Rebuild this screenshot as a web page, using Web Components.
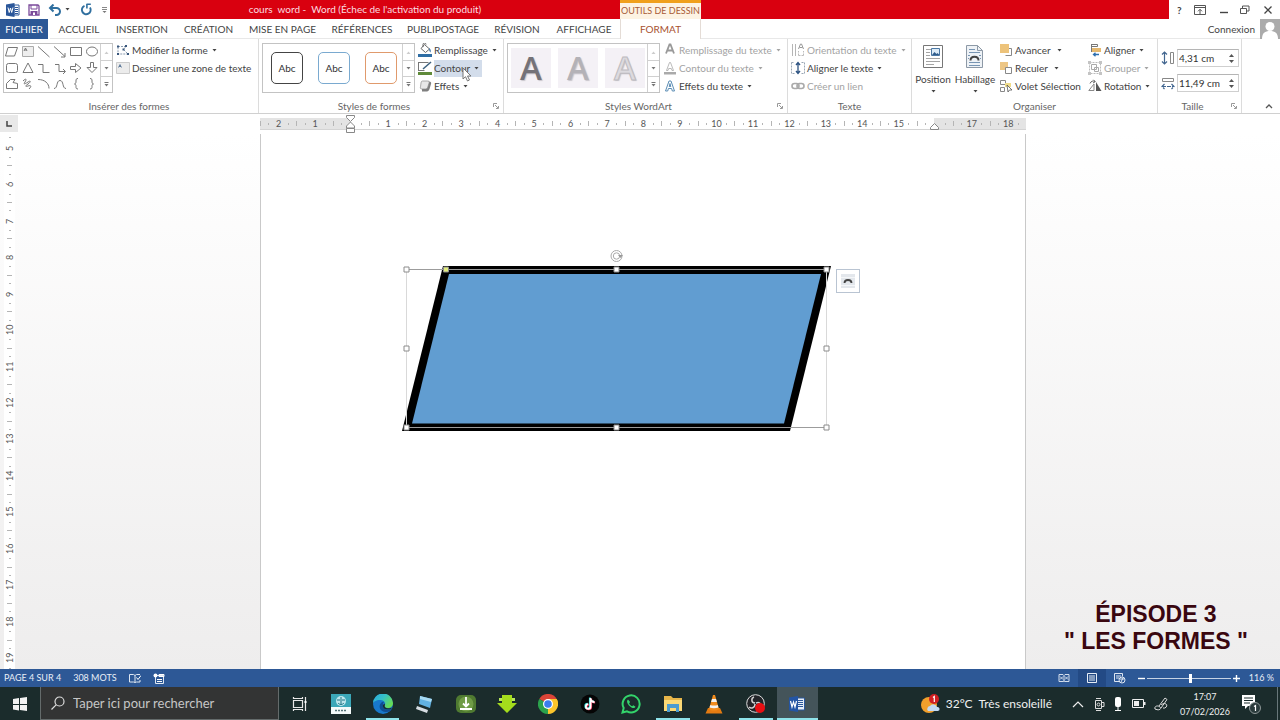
<!DOCTYPE html>
<html lang="fr">
<head>
<meta charset="utf-8">
<title>cours word - Word</title>
<style>
  :root {
    --ui: Lato, "Open Sans", sans-serif;
    --red: #d9000f;
    --word: #2d5896;
    --ink: #444;
    --mute: #a3a3a3;
    --line: #dcdcdc;
  }
  html, body { margin: 0; height: 100%; }
  body { display: flex; flex-direction: column; min-height: 100vh; overflow: hidden; background: #fff; color: var(--ink); font: 10px/14px var(--ui); }
</style>
</head>
<body>
<title-bar></title-bar>
<ribbon-tabs></ribbon-tabs>
<ribbon-bar></ribbon-bar>
<doc-workspace></doc-workspace>
<status-bar></status-bar>
<task-bar></task-bar>

<script>
const svg = (w, h, body, extra = '') =>
  `<svg width="${w}" height="${h}" viewBox="0 0 ${w} ${h}" fill="none" aria-hidden="true" ${extra}>${body}</svg>`;

const ICONS = {
  word: svg(14, 14, '<path d="M8 2h5v10H8z" fill="#fff" stroke="#2b579a"/><path d="M9 4.500h3M9 6.500h3M9 8.500h3M9 10.500h3" stroke="#2b579a"/><path d="M0 1.500 8.500 0v14L0 12.500z" fill="#2b579a"/><path d="m2 4.500 1.200 5L4.500 5l1.200 4.500L7 4.500" stroke="#fff"/>'),
  save: svg(12, 12, '<path d="M1 1h9l1 1v9H1z" stroke="#7b4a9a" stroke-width="1.300"/><path d="M3 1v4h6V1" stroke="#7b4a9a"/><path d="M2.500 7h7v4h-7z" fill="#7b4a9a"/><path d="M5 8.500h2V11H5z" fill="#fff"/>'),
  undo: svg(14, 12, '<path d="M2 4h6.500a3.300 3.300 0 0 1 0 7H7" stroke="#2f6f9f" stroke-width="2"/><path d="M5.500.5 2 4l3.500 3.500" stroke="#2f6f9f" stroke-width="2"/>'),
  redo: svg(13, 13, '<path d="M4.500 2.800A4.400 4.400 0 1 0 10 4.500" stroke="#2f6f9f" stroke-width="1.900"/><path d="M6.500 1.200h4.300M6.900 5.600V1" stroke="#2f6f9f" stroke-width="1.600"/>'),
  ribbonOpts: svg(12, 10, '<path d="M.5.5h11v9H.5zM.5 2.500h11" stroke="#555"/><path d="M6 9V4.500M4 6.300l2-2 2 2" stroke="#555"/>'),
  min: svg(9, 10, '<path d="M1 7.500h8" stroke="#444" stroke-width="1.400"/>'),
  restore: svg(10, 10, '<path d="M.5 3.500h6v5h-6zM2.500 3V1h6.500v5H7" stroke="#555"/>'),
  close: svg(10, 10, '<path d="m1.500 1.500 7 7m0-7-7 7" stroke="#444" stroke-width="1.300"/>'),
  avatar: svg(20, 20, '<path fill="#ababab" d="M0 0h20v20H0z"/><circle cx="10" cy="7.500" r="4.500" fill="#fff"/><path d="M2 20c0-6 3-8 8-8s8 2 8 8z" fill="#fff"/>'),
  editShape: svg(14, 14, '<path d="M2 3.500h8L7.500 6.500 12 11H2z" stroke="#8a9bb0" stroke-dasharray="2 1"/><path d="M1 2.500h2v2H1zM9 2h2v2H9zM1 10h2v2H1zM11 10h2v2h-2zM6.500 5.500h2v2h-2z" fill="#39577c"/>'),
  textBox: svg(14, 12, '<path d="M.5.5h13v11H.5z" fill="#ececec" stroke="#ccc"/><path d="m2.500 5.500 1.500-3 1.500 3M3 4.500h2" stroke="#4b6b8f" stroke-width=".8"/>'),
  fill: svg(14, 14, '<path d="m6.500 1.500 5 4.500-4 3.500-4.500-4z" stroke="#666" fill="#fff"/><path d="M5 4V1.500a1.500 1.500 0 0 1 3 0" stroke="#666"/><path d="M11 5c2 1 2 3 1.500 4.500C11.500 8.500 11 7 11 5z" fill="#3b73a8"/><path d="M0 11h14v3H0z" fill="#2e6da4"/>'),
  outline: svg(14, 14, '<path d="M.5 1.500h10M.5 1v9M.5 9.500h6" stroke="#777"/><path d="m5 8 8-7" stroke="#3c617f" stroke-width="1.500"/><path d="M0 11h14v3H0z" fill="#5f8a3a"/>'),
  effects: svg(14, 14, '<path d="M4 9 6 2.500h5c2 0 2.500 1 2 2.500l-1.500 5c-.5 2-2 2.500-3.500 2.500H4z" fill="#7f7f7f"/><path d="M3.500 2h5c1.500 0 2 .8 1.500 2.200L8.800 8c-.4 1.400-1.200 2-2.600 2H3C1.500 10 1 9.200 1.500 7.800L2 4c.3-1.300.5-2 1.500-2z" fill="#e8e8e8" stroke="#8a8a8a" stroke-width=".7" transform="translate(1)"/>'),
  txtFill: svg(14, 14, '<path d="m3 10.500 3.500-9h1l3.500 9M4.500 7.500h5" stroke="#999" stroke-width="1.800"/>'),
  txtOutline: svg(14, 14, '<path d="m3.500 9.500 3-8h1l3 8h-1.500L8.300 7.500H5.700L5 9.500z" stroke="#aaa" stroke-width=".8"/><path d="M1 11h12v2.500H1z" fill="#aaa"/>'),
  txtEffects: svg(14, 14, '<path d="M2.500 12 6 2h2l3.500 10H9.300L8.600 9.500H5.400L4.700 12zM6.200 7.500h1.600L7 4.500z" fill="#fff" stroke="#5b8db5"/>'),
  orient: svg(14, 14, '<path d="M1.500 1v12M4.500 1v12" stroke="#b5b5b5"/><path d="m7.500 6 2-5h1l2 5M8.500 4.500h3" stroke="#999"/><path d="M7.500 12.500V8M12.500 12.500V8M7.500 12.500h5" stroke="#bbb" stroke-dasharray="2 1"/>'),
  alignTxt: svg(14, 14, '<path d="M.5 1.500h3m7 0h3v11h-3m-7 0h-3v-11" stroke="#9aa7b5" stroke-dasharray="2 1"/><path d="M7 2v10M5 4l2-2.500L9 4M5 10l2 2.500L9 10" stroke="#2d5382" stroke-width="1.300"/>'),
  link: svg(14, 10, '<rect x="1" y="2.500" width="7" height="5" rx="2.500" stroke="#aaa" stroke-width="1.600"/><rect x="6" y="2.500" width="7" height="5" rx="2.500" stroke="#aaa" stroke-width="1.600"/>'),
  forward: svg(14, 14, '<path d="M6.500 12.500h6v-7H9" stroke="#888"/><path d="M1 1h9v9H1z" fill="#edc37a"/>'),
  backward: svg(14, 14, '<path d="M1 1h8v8H1z" fill="#edc685"/><path d="M6.500 6.500h6v6h-6z" fill="#fff" stroke="#888"/>'),
  pane: svg(14, 14, '<path d="M1.500 1.500h5v4h-5zM1.500 8.500h4v4h-4z" stroke="#888"/><path d="M6 4h6v4H6z" fill="#f0dc8a"/><path d="m8 6 5 5H10.500L9 13z" fill="#fff" stroke="#555" stroke-width=".8"/>'),
  align: svg(14, 14, '<path d="M3.500 1.500h6v2h-6z" stroke="#777"/><path d="M3.500 1v8" stroke="#777"/><path d="M4 5h9v4H4z" fill="#e6b96f"/><path d="M11 11.500H5.500M7.500 9.800 5.500 11.500l2 1.700" stroke="#2d6fb0" stroke-width="1.300"/>'),
  group: svg(14, 14, '<path d="M1.500 1.500h11v11h-11z" stroke="#bbb" stroke-dasharray="2 1"/><path d="M3.500 3.500h5v5h-5zM6.500 6.500h4v4h-4z" stroke="#aaa"/><path d="M0 0h3v3H0zM11 0h3v3h-3zM0 11h3v3H0zM11 11h3v3h-3z" fill="#c4c4c4"/>'),
  rotate: svg(14, 14, '<path d="M6 11.500H.8L6 5z" stroke="#888"/><path d="M8 12V3l5.500 9z" fill="#555"/><path d="M2 4.500C3 2 5 1.500 7 2.500M5.500.8 7.300 2.700 5 4" stroke="#666"/>'),
  height: svg(14, 14, '<path d="M3.500 1v12M1 3.500 3.500 1 6 3.500M1 10.500 3.500 13 6 10.500" stroke="#41658f" stroke-width="1.200"/><path d="M9.500 1.500h3v11h-3z" stroke="#888"/>'),
  width: svg(14, 14, '<path d="M1.500 2.500h11v3h-11z" stroke="#888"/><path d="M1 10.500h12M3.500 8 1 10.500 3.500 13M10.500 8l2.500 2.500-2.500 2.500" stroke="#41658f" stroke-width="1.200" stroke-dasharray="4 1"/>'),
  position: svg(20, 24, '<path d="M.5.5h19v22H.5z" fill="#fff" stroke="#777"/><path d="M3 4.500h14M3 7.500h4M3 10.500h4M3 13.500h14M3 16.500h14M3 19.500h8" stroke="#a5a5a5"/><path d="M8.500 3.500h8v7h-8z" fill="#dcebf7" stroke="#4b77a3"/><path d="m9 10 2.500-3 2 2 1-1 2 2z" fill="#2f5c8c"/>'),
  wrap: svg(20, 24, '<path d="M1.500.5h11l5 5v17h-16z" fill="#eef2f6" stroke="#8d99a6"/><path d="M12.500.5v5h5" stroke="#8d99a6"/><path d="M4 4.500h6M4 7.500h11M3 10.500h2M14 10.500h2M3 13.500h1M15 13.500h1M4 17.500h11M4 20.500h11" stroke="#7895b3"/><path d="M5.500 15.500c0-5 8-5 8 0" stroke="#444" stroke-width="2"/>'),
  proof: svg(12, 11, '<path d="M.5 1.500h4l1.500 1v7l-1.500-.5h-4zM6 2.500l1.500-1H11M6 9.500 7.500 9H11V7" stroke="#dfe7f2"/><path d="m7.500 4.500 1.500 2 3-4" stroke="#fff"/>'),
  macro: svg(12, 11, '<path d="M2.500 2.500h8v8h-8z" stroke="#dfe7f2" fill="none"/><path d="M4 6.500h5M4 8.500h5M6 1.500h5v2H6z" stroke="#fff"/><circle cx="2.500" cy="2.500" r="2" fill="#fff"/>'),
  read: svg(12, 10, '<path d="M1 1.500h4l1 1 1-1h4v7H7l-1-.5-1 .5H1zM6 2.500v6M2 3.500l3 3M2 6.500l3-3M7 3.500l3 3M7 6.500l3-3" stroke="#d4deec"/>'),
  printView: svg(12, 10, '<path d="M1.500.5h9v9h-9zM3 3h6M3 5h6M3 7h6" stroke="#e6edf6"/>'),
  web: svg(12, 11, '<path d="M.5.500h8v3M.5.500v8H5M2 3h5M2 5h3" stroke="#dfe7f2"/><circle cx="8" cy="7" r="3" stroke="#dfe7f2"/><path d="M6 6h4M7 9l2-4" stroke="#dfe7f2"/>'),
};

const SHAPES = [
  ['Parallélogramme', '<path d="M4 3.500h9.500L10.500 12H1.500z"/>'],
  ['Zone de texte', '<path d="M2.500 2.500h11v10h-11z" fill="#eee" stroke="#aaa"/><path d="m4 7 1.500-3L7 7M4.500 6h2"/>'],
  ['Trait', '<path d="M2 2.500 13.500 13"/>'],
  ['Flèche', '<path d="M2 2.500 13 12.500M13 9v4H9"/>'],
  ['Rectangle', '<path d="M2.500 3.500h11v8h-11z"/>'],
  ['Ellipse', '<ellipse cx="8" cy="7.500" rx="5.500" ry="4.500"/>'],
  ['Rectangle arrondi', '<rect x="2.500" y="3.500" width="11" height="9" rx="2"/>'],
  ['Triangle', '<path d="m8 3 5 9.500H3z"/>'],
  ['Connecteur en angle', '<path d="M2 4.500h5v8h6.500"/>'],
  ['Connecteur fléché', '<path d="M3 4.500h4v7h6M11 9l2.500 2.500L11 14"/>'],
  ['Flèche droite', '<path d="M2.500 6.500h5v-3L13 8l-5.500 4.500v-3h-5z"/>'],
  ['Flèche bas', '<path d="M6.500 2.500h3v5H13l-5 5-5-5h3.500z"/>'],
  ['Forme libre', '<path d="M2.500 12.500v-5l4-4H11L9 6.500l4.500 1v5z"/>'],
  ['Dessin à main levée', '<path d="M3 5c3-3 4-2 2 1s0 2 3 0 3 0 0 2-3 3 0 2 4 0 1 3"/>'],
  ['Arc', '<path d="M2 3.500c7 0 11 4 11 9"/>'],
  ['Courbe', '<path d="M2 12.500c4 0 2-8 6-8s2 8 6 8"/>'],
  ['Accolade ouvrante', '<path d="M10 2.500c-2 0-2 1-2 2.500S8 7.500 6.500 8C8 8.500 8 9 8 10.500s0 2.500 2 2.500"/>'],
  ['Accolade fermante', '<path d="M6 2.500c2 0 2 1 2 2.500s0 2.500 1.500 3C8 8.500 8 9 8 10.500S8 13 6 13"/>'],
];

const RESET = `
  *, *::before { box-sizing: border-box; }
  button { font: inherit; color: inherit; background: none; border: 0; padding: 0; margin: 0; display: flex; align-items: center; white-space: pre; }
  svg { display: block; flex: none; }
`;

function element(name, css, html) {
  customElements.define(name, class extends HTMLElement {
    connectedCallback() {
      if (this.shadowRoot) return;
      const root = this.attachShadow({ mode: 'open' });
      root.innerHTML = `<style>${RESET}${css}</style>${typeof html === 'function' ? html(this) : html}`;
    }
  });
}

/* ---------- small parts ---------- */

element('menu-arrow', `
  :host { display: block; width: 5px; height: 3px; color: #444; }
`, svg(5, 3, '<path d="M.5 0h4L2.500 2.500z" fill="currentColor"/>'));

element('tool-button', `
  :host { display: block; height: 18px; }
  button { height: 18px; }
  .icon { width: 16px; }
  .text { display: flex; align-items: center; height: 17px; padding-right: 3px; gap: 4px; }
  :host([active]) .text { background: #d3ddeb; }
  :host([disabled]) button, :host([disabled]) menu-arrow { color: var(--mute); }
`, el => `<button type="button" ${el.hasAttribute('disabled') ? 'disabled' : ''}>
  <span class="icon">${ICONS[el.getAttribute('icon')]}</span>
  <span class="text"><slot></slot>${el.hasAttribute('menu') ? '<menu-arrow></menu-arrow>' : ''}</span></button>`);

element('big-button', `
  :host { display: block; width: 42px; }
  button { flex-direction: column; width: 100%; padding-top: 4px; }
  .text { margin-top: 3px; }
  menu-arrow { margin-top: 4px; }
`, el => `<button type="button">${ICONS[el.getAttribute('icon')]}<span class="text"><slot></slot></span><menu-arrow></menu-arrow></button>`);

element('ribbon-group', `
  :host { display: flex; flex-direction: column; flex: none; border-right: 1px solid var(--line); }
  .body { display: flex; height: 60px; padding: 2px 0 0 3px; gap: 3px; }
  .foot { display: flex; align-items: center; height: 14px; color: #666; }
  .foot span { flex: 1; text-align: center; }
  .foot button { width: 14px; height: 14px; justify-content: center; }
`, el => `<div class="body"><slot></slot></div>
  <div class="foot"><span>${el.getAttribute('label')}</span>${el.hasAttribute('launcher')
    ? `<button type="button" aria-label="Options">${svg(6, 6, '<path d="M.5 4V.5H4M2 2l3 3M5.500 3v2.500H3" stroke="#999"/>')}</button>` : ''}</div>`);

element('style-gallery', `
  :host { display: flex; height: 50px; margin-top: 2px; border: 1px solid #c3c3c3; background: #fff; }
  .items { flex: 1; display: flex; align-items: center; }
  .scroll { display: grid; grid-template-rows: repeat(3, 1fr); width: 12px; border-left: 1px solid #d0d0d0; }
  .scroll button { justify-content: center; color: #777; }
  .scroll button + button { border-top: 1px solid #d0d0d0; }
  .scroll button:first-child { color: #ccc; }
`, `<div class="items"><slot></slot></div>
  <div class="scroll">
    <button type="button" aria-label="Haut">${svg(5, 3, '<path d="M.5 3h4L2.500.5z" fill="currentColor"/>')}</button>
    <button type="button" aria-label="Bas">${svg(5, 3, '<path d="M.5 0h4L2.500 2.500z" fill="currentColor"/>')}</button>
    <button type="button" aria-label="Autres">${svg(5, 5, '<path d="M.5 0h4v1h-4zM.5 2h4L2.500 4.500z" fill="currentColor"/>')}</button>
  </div>`);

element('size-field', `
  :host { display: flex; align-items: center; height: 18px; }
  label { width: 16px; }
  .box { display: flex; width: 62px; height: 18px; border: 1px solid #cfcfcf; border-top-color: #b5b5b5; background: #fff; }
  input { flex: 1; min-width: 0; border: 0; padding: 0 0 0 1px; font: 10px/16px var(--ui); color: #333; background: none; outline: 0; }
  .spin { display: flex; flex-direction: column; justify-content: center; align-items: center; gap: 3px; width: 13px; }
`, el => `<label for="f" aria-label="${el.getAttribute('label')}">${ICONS[el.getAttribute('icon')]}</label>
  <span class="box"><input id="f" value="${el.getAttribute('value')}">
  <span class="spin"><button type="button" aria-label="Plus">${svg(5, 3, '<path d="M0 3h5L2.500 0z" fill="#555"/>')}</button><button type="button" aria-label="Moins">${svg(5, 3, '<path d="M0 0h5L2.500 3z" fill="#555"/>')}</button></span></span>`);

/* ---------- title bar ---------- */

element('title-bar', `
  :host { display: grid; grid-template-columns: 110px 510px 81px 1fr 111px; height: 19px; flex: none; background: var(--red); }
  .quick { display: flex; align-items: center; gap: 8px; padding-left: 6px; background: #fff; }
  .quick .undo { gap: 3px; }
  .quick .redo { margin: 0 1px 0 2px; }
  h1 { margin: 0; font: 10px/19px var(--ui); color: #fbdde0; text-align: center; white-space: pre; }
  .context { background: #fdf3e3; border-top: 3px solid #f0a01c; color: #a85a35; text-align: center; font-size: 9px; line-height: 15px; white-space: nowrap; }
  .window { grid-column: 5; display: flex; align-items: center; justify-content: space-between; padding: 0 7px 0 8px; background: #fff; }
  .help { font-weight: bold; }
`, `
  <div class="quick">
    <button type="button" aria-label="Word">${ICONS.word}</button>
    <button type="button" aria-label="Enregistrer">${ICONS.save}</button>
    <button type="button" class="undo" aria-label="Annuler">${ICONS.undo}<menu-arrow></menu-arrow></button>
    <button type="button" class="redo" aria-label="Rétablir">${ICONS.redo}</button>
    <button type="button" aria-label="Personnaliser">${svg(5, 6, '<path d="M0 .5h5M0 2.500h5" stroke="#888"/><path d="M.5 4h4L2.500 6z" fill="#777"/>')}</button>
  </div>
  <h1>cours  word -  Word (Échec de l'activation du produit)</h1>
  <div class="context">OUTILS DE DESSIN</div>
  <div class="window">
    <button type="button" class="help">?</button>
    <button type="button" aria-label="Options du ruban">${ICONS.ribbonOpts}</button>
    <button type="button" aria-label="Réduire">${ICONS.min}</button>
    <button type="button" aria-label="Restaurer">${ICONS.restore}</button>
    <button type="button" aria-label="Fermer">${ICONS.close}</button>
  </div>`);

/* ---------- tabs ---------- */

element('ribbon-tabs', `
  :host { display: flex; height: 20px; flex: none; }
  nav { display: grid; grid-template-columns: 50px 58px 68px 65px 83px 76px 86px 62px 72px 81px; }
  nav button, .account button { justify-content: center; height: 20px; }
  nav button { border-bottom: 1px solid #e8e8e8; }
  nav .file { width: 48px; background: var(--word); color: #fff; border: 0; }
  nav .on { color: #a8512f; border: solid #e4dcd6; border-width: 0 1px; }
  .account { flex: 1; display: flex; justify-content: flex-end; align-items: center; border-bottom: 1px solid #e8e8e8; }
  .account button { gap: 5px; }
`, `<nav>
    <button type="button" class="file">FICHIER</button>
    ${['ACCUEIL', 'INSERTION', 'CRÉATION', 'MISE EN PAGE', 'RÉFÉRENCES', 'PUBLIPOSTAGE', 'RÉVISION', 'AFFICHAGE']
      .map(t => `<button type="button">${t}</button>`).join('')}
    <button type="button" class="on">FORMAT</button>
  </nav>
  <div class="account"><button type="button">Connexion${ICONS.avatar}</button></div>`);

/* ---------- ribbon ---------- */

element('ribbon-bar', `
  :host { display: flex; height: 74px; flex: none; border-bottom: 1px solid #d0d0d0; }
  .stack { display: grid; grid-template-rows: repeat(3, 18px); align-content: start; }
  .wide { width: 86px; }
  .shapes { display: grid; grid-template-columns: repeat(6, 16px); grid-template-rows: repeat(3, 16px); }
  .shapes svg { stroke: #777; }
  .abc { display: flex; gap: 15px; padding-left: 8px; }
  .abc button { width: 32px; height: 32px; border: 1px solid; border-radius: 5px; justify-content: center; background: #fff; }
  .abc span { color: #333; }
  .art { display: flex; gap: 7px; padding-left: 3px; }
  .art button { width: 40px; height: 40px; background: #f4f1f6; justify-content: center; font: 600 33px/40px "Open Sans", sans-serif; color: #747278; text-shadow: 1px 1px 1px #c9c6cc; }
  .art button:nth-child(2) { color: #b4b2b7; }
  .art button:nth-child(3) { color: #dcdadf; -webkit-text-stroke: 1px #bdbbc0; }
  .bigs { display: flex; margin-left: -3px; }
  .fields { display: grid; row-gap: 7px; align-content: start; padding-top: 8px; }
  .rest { flex: 1; display: flex; justify-content: flex-end; align-items: flex-end; padding: 0 7px 4px 0; }
`, `
  <ribbon-group label="Insérer des formes" style="width:259px">
    <style-gallery style="width:110px"><div class="shapes">${SHAPES.map(([n, p]) =>
      `<button type="button" aria-label="${n}">${svg(16, 16, p)}</button>`).join('')}</div></style-gallery>
    <div class="stack">
      <tool-button icon="editShape" menu>Modifier la forme</tool-button>
      <tool-button icon="textBox">Dessiner une zone de texte</tool-button>
    </div>
  </ribbon-group>
  <ribbon-group label="Styles de formes" launcher style="width:245px">
    <style-gallery style="width:153px"><div class="abc">
      <button type="button" style="border-color:#444"><span>Abc</span></button>
      <button type="button" style="border-color:#7aaad0"><span>Abc</span></button>
      <button type="button" style="border-color:#e09a6c"><span>Abc</span></button></div></style-gallery>
    <div class="stack">
      <tool-button icon="fill" menu>Remplissage</tool-button>
      <tool-button icon="outline" menu active>Contour</tool-button>
      <tool-button icon="effects" menu>Effets</tool-button>
    </div>
  </ribbon-group>
  <ribbon-group label="Styles WordArt" launcher style="width:284px">
    <style-gallery style="width:153px"><div class="art">
      <button type="button">A</button><button type="button">A</button><button type="button">A</button></div></style-gallery>
    <div class="stack">
      <tool-button icon="txtFill" menu disabled>Remplissage du texte</tool-button>
      <tool-button icon="txtOutline" menu disabled>Contour du texte</tool-button>
      <tool-button icon="txtEffects" menu>Effets du texte</tool-button>
    </div>
  </ribbon-group>
  <ribbon-group label="Texte" style="width:124px">
    <div class="stack">
      <tool-button icon="orient" menu disabled>Orientation du texte</tool-button>
      <tool-button icon="alignTxt" menu>Aligner le texte</tool-button>
      <tool-button icon="link" disabled>Créer un lien</tool-button>
    </div>
  </ribbon-group>
  <ribbon-group label="Organiser" style="width:246px">
    <div class="bigs"><big-button icon="position">Position</big-button><big-button icon="wrap">Habillage</big-button></div>
    <div class="stack wide">
      <tool-button icon="forward" menu>Avancer </tool-button>
      <tool-button icon="backward" menu>Reculer </tool-button>
      <tool-button icon="pane">Volet Sélection</tool-button>
    </div>
    <div class="stack">
      <tool-button icon="align" menu>Aligner</tool-button>
      <tool-button icon="group" menu disabled>Grouper</tool-button>
      <tool-button icon="rotate" menu>Rotation</tool-button>
    </div>
  </ribbon-group>
  <ribbon-group label="Taille" launcher style="width:84px">
    <div class="fields">
      <size-field icon="height" label="Hauteur" value="4,31 cm"></size-field>
      <size-field icon="width" label="Largeur" value="11,49 cm"></size-field>
    </div>
  </ribbon-group>
  <div class="rest"><button type="button" aria-label="Réduire le ruban">${svg(8, 5, '<path d="m1 4 3-3 3 3" stroke="#555" stroke-width="1.300"/>')}</button></div>`);

/* ---------- rulers ---------- */

element('cm-ruler', `
  :host { display: grid; font-size: 9px; color: #555; }
  :host { grid-auto-flow: column; grid-auto-columns: 1fr; }
  :host([vertical]) { grid-auto-flow: row; grid-auto-rows: 1fr; grid-auto-columns: auto; }
  .cm { display: flex; align-items: center; justify-content: space-between; min-width: 0; min-height: 0; }
  :host([vertical]) .cm { flex-direction: column; }
  .n { display: flex; justify-content: center; align-items: center; width: 4px; line-height: 12px; }
  :host([vertical]) .n { width: 12px; height: 4px; writing-mode: vertical-rl; transform: rotate(180deg); }
  .t { width: 1px; height: 5px; background: #b5b5b5; }
  .d { width: 1px; height: 2px; background: #b5b5b5; }
  :host([vertical]) .t { width: 5px; height: 1px; }
  :host([vertical]) .d { width: 2px; height: 1px; }
`, el => {
  const from = +el.getAttribute('from'), to = +el.getAttribute('to');
  const skip = (el.getAttribute('skip') || '').split(',').filter(Boolean).map(Number);
  let out = '';
  for (let i = from; i <= to; i++) {
    out += `<span class="cm"><i class="t"></i><i class="d"></i><span class="n">${skip.includes(i) ? '' : Math.abs(i)}</span><i class="d"></i><i></i></span>`;
  }
  return out;
});

/* ---------- drawn shape ---------- */

element('drawn-shape', `
  :host { display: block; position: absolute; left: 139px; top: 110px; width: 462px; height: 192px; }
  .options { position: absolute; left: 436px; top: 25px; width: 24px; height: 24px; border: 1px solid #b9c4d2; background: #fff; justify-content: center; }
`, () => {
  const handle = (x, y, c = '#fff') => `<path d="M${x - 2.5} ${y - 2.5}h5v5h-5z" fill="${c}" stroke="#8c8c8c"/>`;
  return svg(462, 192, `
    <path d="M43 22h388l-41 165H2z" fill="#000"/>
    <path d="M49 30h372l-37 149.500H12z" fill="#619dd1"/>
    <path d="M6.500 25.500v158M426.500 25.500v158" stroke="#d9d9d9"/>
    <path d="M6.500 25.500h420M6.500 183.500h420" stroke="#9c9c9c"/>
    <circle cx="216.500" cy="12" r="5.500" stroke="#aaa"/><circle cx="216.500" cy="12" r="3.200" stroke="#aaa"/><path d="m218 11 2.500 3 2.500-3z" fill="#999"/>
    ${handle(6.5, 25.5)}${handle(216.5, 25.5)}${handle(426.5, 25.5)}${handle(6.5, 104.5)}${handle(426.5, 104.5)}
    ${handle(6.5, 183.5)}${handle(216.5, 183.5)}${handle(426.5, 183.5)}${handle(46, 25.5, '#e3ee7d')}`)
  + `<button type="button" class="options" aria-label="Options de disposition">${svg(14, 14, '<path d="M0 0h14v14H0z" fill="#e3e7ec"/><path d="M0 3.500h14M0 11.500h14" stroke="#f4f6f8"/><path d="M3.500 9c0-4 7-4 7 0" stroke="#444" stroke-width="1.800"/>')}</button>`;
});

/* ---------- workspace ---------- */

element('doc-workspace', `
  :host { display: grid; grid-template-columns: 18px 1fr; grid-template-rows: 20px minmax(0, 1fr); flex: 1; min-height: 0; position: relative; overflow: hidden;
    background: linear-gradient(#fff 20px, #eeeded 100%); }
  .corner { height: 17px; margin-top: 1px; background: #e9e9e9; justify-content: center; }
  .top { display: flex; justify-content: center; padding-right: 12px; background: #fff; }
  .band { position: relative; width: 766px; height: 12px; margin-top: 4px; border-bottom: 1px solid #d4d4d4;
    background: linear-gradient(90deg, #e4e4e4 90px, #fff 90px 674px, #e4e4e4 674px); }
  .band cm-ruler { height: 11px; }
  .mark { position: absolute; }
  .mark.left { left: 86px; top: -3px; }
  .mark.right { left: 670px; top: 5px; }
  .side { overflow: hidden; padding-left: 4px; }
  .side cm-ruler { width: 11px; height: 547px; margin-top: -5px; background: #fff; }
  main { display: flex; justify-content: center; padding-right: 12px; }
  .page { position: relative; width: 766px; background: #fff; border: solid #c9c9c9; border-width: 0 1px; }
  .caption { position: absolute; right: 32px; bottom: 14px; margin: 0; text-align: center; font: bold 23px/27px "Liberation Sans", Arial, sans-serif; color: #3a0710; }
`, `
  <button type="button" class="corner" aria-label="Tabulation">${svg(6, 6, '<path d="M1 0v5h5" stroke="#444" stroke-width="1.500"/>')}</button>
  <div class="top"><div class="band">
    <cm-ruler from="-2" to="18" skip="0,16"></cm-ruler>
    ${svg(9, 18, '<path d="M.5.5h8v2l-4 4-4-4zM4.500 7l4 4v2h-8v-2zM.5 13.500h8v4h-8z" fill="#fff" stroke="#888"/>', 'class="mark left"')}
    ${svg(9, 8, '<path d="m4.500.5 4 4v2h-8v-2z" fill="#fff" stroke="#888"/>', 'class="mark right"')}
  </div></div>
  <div class="side"><cm-ruler vertical from="5" to="19"></cm-ruler></div>
  <main><article class="page"><drawn-shape></drawn-shape></article></main>
  <p class="caption">ÉPISODE 3<br>" LES FORMES "</p>`);

/* ---------- status bar ---------- */

element('status-bar', `
  :host { display: flex; align-items: center; height: 18px; flex: none; padding: 0 6px 0 4px; background: var(--word); color: #e8eef6; font-size: 9px; white-space: nowrap; }
  .left { display: flex; align-items: center; gap: 12px; }
  .views { display: flex; margin-left: auto; height: 18px; }
  .views button { width: 28px; justify-content: center; }
  .views .on { background: #234a85; }
  .zoom { display: flex; align-items: center; margin-left: 3px; gap: 1px; }
  .zoom button { width: 9px; justify-content: center; }
  input { -webkit-appearance: none; appearance: none; width: 84px; height: 12px; margin: 0; background: linear-gradient(#c5d2e4, #c5d2e4) center / 100% 1px no-repeat; }
  input::-webkit-slider-thumb { -webkit-appearance: none; width: 3px; height: 9px; background: #fff; border: 0; }
  output { width: 32px; text-align: right; }
`, `
  <div class="left"><span>PAGE 4 SUR 4</span><span>308 MOTS</span>
    <button type="button" aria-label="Vérification">${ICONS.proof}</button>
    <button type="button" aria-label="Macros">${ICONS.macro}</button></div>
  <div class="views">
    <button type="button" aria-label="Lecture">${ICONS.read}</button>
    <button type="button" class="on" aria-label="Page">${ICONS.printView}</button>
    <button type="button" aria-label="Web">${ICONS.web}</button></div>
  <div class="zoom">
    <button type="button" aria-label="Zoom arrière">${svg(7, 7, '<path d="M0 3.500h7" stroke="#fff" stroke-width="1.400"/>')}</button>
    <input type="range" min="0" max="100" value="52" aria-label="Zoom">
    <button type="button" aria-label="Zoom avant">${svg(7, 7, '<path d="M0 3.500h7M3.500 0v7" stroke="#fff" stroke-width="1.400"/>')}</button>
    <output>116 %</output></div>`);

/* ---------- task bar ---------- */

const APPS = [
  ['Vue des tâches', svg(16, 16, '<path d="M1.500 4.500h9v7h-9zM1.500 1v1.500h9V1M1.500 15v-1.500h9V15M13.500 1v14" stroke="#e8e8e8" stroke-width="1.200"/><path d="M12.500 5h2v2h-2z" fill="#fff"/>')],
  ['Assistant', svg(20, 20, '<path fill="#3ba7b8" d="M0 0h20v14H0z"/><path fill="#f4fafa" d="M0 13h20v7H0z"/><circle cx="10" cy="7" r="5" fill="#bfe6ec"/><path d="M6 6h3M11 6h3M10 3v8M7 9c2 2 4 2 6 0" stroke="#1f7485"/><path d="M4 16.500h12" stroke="#58757a" stroke-width="1.500" stroke-dasharray="2 1"/>')],
  ['Edge', svg(20, 20, '<defs><linearGradient id="e" x2="1" y2=".6"><stop stop-color="#2aa6e0"/><stop offset=".5" stop-color="#35c1c8"/><stop offset="1" stop-color="#67dc54"/></linearGradient></defs><circle cx="10" cy="10" r="10" fill="#1878cc"/><path d="M0 10a10 10 0 0 1 20-1c0 4-3 5-5 5-3 0-4-1-3-3 1-3-2-5-5-5-4 0-7 2-7 4z" fill="url(#e)"/><path d="M8 9c-3 3-1 9 5 9 3 0 5-1 6-3-4 2-9 1-9-4 0-1 0-2 1-3-1-.5-2-.2-3 1z" fill="#0f4d94"/><path d="M11.500 9.500c1 1-.2 2.200.3 3.200 1 1.700 4.500 2.300 7 .8l-.6 1.500c-4 1.500-9 0-8.200-4z" fill="#1b2c2c"/>'), 'run'],
  ['Bureau', svg(18, 18, '<path d="m5 1 12 3-2 9-11-4z" fill="#62b2e2"/><path d="m5 1 12 3-1 3L5 4z" fill="#a7daf3"/><path d="m2 11 11 4-1 3-11-4z" fill="#d7dde2"/>')],
  ['Téléchargements', svg(20, 18, '<rect width="20" height="18" rx="5" fill="#4f7a31"/><circle cx="10" cy="9" r="7.500" fill="#6f9b46"/><path d="M10 2v9M7 8.500l3 3 3-3M4 14h12" stroke="#fff" stroke-width="1.800"/>')],
  ['Gestionnaire', svg(20, 18, '<path d="M5 0h10v8h5l-10 10L0 8h5z" fill="#a4dd1c"/><path d="M2 3h3v3H2zM15 3h3v3h-3z" fill="#b9e85a"/>')],
  ['Chrome', svg(20, 20, '<path d="M10 10 1.300 5a10 10 0 0 1 17.400 0z" fill="#dc4437"/><path d="M10 10 18.700 5A10 10 0 0 1 10 20z" fill="#fbc52c"/><path d="M10 10v10A10 10 0 0 1 1.300 5z" fill="#2ba24c"/><path d="M10 5h8.700a10 10 0 0 1 1.300 5l-5 1z" fill="#fbc52c"/><circle cx="10" cy="10" r="5" fill="#fff"/><circle cx="10" cy="10" r="3.800" fill="#3b7ded"/>')],
  ['TikTok', svg(20, 20, '<circle cx="10" cy="10" r="9.500" fill="#050505"/><path d="M10.500 4v8.500a2.300 2.300 0 1 1-2.300-2.300M10.500 5c.5 2 2 3 4 3" stroke="#27d7d2" stroke-width="2" transform="translate(-.6 -.4)"/><path d="M10.500 4v8.500a2.300 2.300 0 1 1-2.300-2.300M10.500 5c.5 2 2 3 4 3" stroke="#f23b63" stroke-width="2" transform="translate(.6 .5)"/><path d="M10.500 4v8.500a2.300 2.300 0 1 1-2.300-2.300M10.500 5c.5 2 2 3 4 3" stroke="#fff" stroke-width="1.800"/>')],
  ['WhatsApp', svg(20, 20, '<path d="M1.500 18.500 2.700 14a8.500 8.500 0 1 1 3.300 3.300z" stroke="#33d46b" stroke-width="2"/><path d="M7 5.500c-2 1.500-.5 4.500 1.500 6.500s5 3 6 .8l-2.200-1.500-1.200 1c-1.500-.7-2.500-1.800-3-3l1-1.300z" fill="#33d46b"/>')],
  ['Explorateur', svg(20, 18, '<path d="M1 1h7l2 2h9v13H1z" fill="#e7b64a"/><path d="M1 5h18v11H1z" fill="#fbd976"/><path d="M4 9h12v8h-3v-4H7v4H4z" fill="#4b9bd1"/>'), 'run'],
  ['VLC', svg(18, 20, '<path d="M3 14h12l2.500 5.500H.5z" fill="#e47b12"/><path d="M8 1h2l4 14c-2 2-8 2-10 0z" fill="#f28c1d"/><path d="m7 5-.9 3h5.800L11 5zM5.300 11l-.8 2.500c3 1 6 1 9 0l-.8-2.500c-2 .7-5.400.7-7.400 0z" fill="#f3f3f3"/>')],
  ['OBS', svg(20, 20, '<circle cx="9.500" cy="9.500" r="8.800" fill="#222428" stroke="#ddd"/><path d="M9 9C5 9 5 4 8 3M10 9c4-2 6 2 4 5M9 10c0 4-4 5-6 3" stroke="#cfcfcf" stroke-width="1.500"/><circle cx="14" cy="14" r="5" fill="#e80f12"/>'), 'run'],
  ['Word', svg(16, 16, '<path d="M8 2h7.500v12H8z" fill="#e8eef7" stroke="#2b579a"/><path d="M9 4.500h5M9 6.500h5M9 8.500h5M9 10.500h5" stroke="#2b579a"/><path d="M0 1.500 9 0v16l-9-1.500z" fill="#2455a4"/><path d="M1.500 5 3 11l1.500-5L6 11l1.500-6" stroke="#fff" stroke-width="1.200"/>'), 'run on'],
];

element('task-bar', `
  :host { display: flex; height: 33px; flex: none; background: #1b2c2c; color: #f0f0f0; font-size: 12px; }
  button { justify-content: center; }
  .start { width: 40px; }
  label { display: flex; align-items: center; gap: 8px; width: 239px; padding-left: 10px; background: #333434; border: 1px solid #646b6b; border-width: 0 1px 1px; }
  input { flex: 1; min-width: 0; padding: 0; border: 0; outline: 0; background: none; font: 13px/20px var(--ui); color: #ccc; }
  input::placeholder { color: #c6c6c6; opacity: 1; }
  .apps { display: grid; grid-template-columns: repeat(13, 1fr); width: 539px; }
  .apps button { position: relative; }
  .on { background: #44545a; }
  .run::after { content: ""; position: absolute; bottom: 0; left: 4px; right: 4px; height: 2px; background: #8fe3ea; }
  .run.on::after { left: 0; right: 0; }
  .tray { display: flex; align-items: center; margin-left: auto; }
  .weather { gap: 6px; }
  .icons { display: flex; align-items: center; justify-content: space-between; width: 96px; margin-left: 20px; }
  .clock { width: 74px; flex-direction: column; font-size: 9px; line-height: 15px; }
  .note { width: 20px; }
  .show { width: 3px; height: 33px; margin-left: 15px; border-left: 1px solid #68777a; }
`, `
  <button type="button" class="start" aria-label="Démarrer">${svg(14, 14, '<path d="m0 2 6-1v6H0zM7 1l7-1v7H7zM0 8h6v5.500L0 12.500zM7 8h7v6l-7-1z" fill="#f2f2f2"/>')}</button>
  <label>${svg(14, 14, '<circle cx="8.500" cy="5.500" r="4.500" stroke="#ddd" stroke-width="1.200"/><path d="M5.300 8.700.5 13.500" stroke="#ddd" stroke-width="1.200"/>')}<input placeholder="Taper ici pour rechercher" aria-label="Rechercher"></label>
  <div class="apps">${APPS.map(([n, i, c = '']) => `<button type="button" class="${c}" aria-label="${n}">${i}</button>`).join('')}</div>
  <div class="tray">
    <button type="button" class="weather">${svg(20, 20, '<circle cx="9" cy="11" r="8" fill="#f2a02c"/><path d="M8 17a3 3 0 0 1 2-5 4 4 0 0 1 7 1 2 2 0 0 1 1 4z" fill="#c3d9f2"/><circle cx="14" cy="5" r="5" fill="#d01f22"/><path d="m13 3.500 1.300-1V8" stroke="#fff" stroke-width="1.200"/>')}<span>32°C  Très ensoleillé</span></button>
    <div class="icons">
      ${svg(12, 8, '<path d="m1 7 5-5 5 5" stroke="#eee" stroke-width="1.200"/>')}
      ${svg(12, 14, '<path d="M2.500 3.500h6v8h-6zM8.500 5.500H11v4H8.500M3 1.500h5M3 13.500h5" stroke="#ddd"/><circle cx="5.500" cy="7.500" r="1.500" stroke="#ddd"/>')}
      ${svg(10, 14, '<rect x="2" width="6" height="10" rx="2" fill="#fff"/><path d="M5 10v3.500M2 13.500h6" stroke="#fff"/>')}
      ${svg(14, 9, '<path d="M.5.5h11v8H.5z" stroke="#eee"/><path d="M2 2h5v5H2z" fill="#eee"/><path d="M12 3h1.500v3H12z" fill="#eee"/>')}
      ${svg(14, 14, '<path d="M1 12c-1-3 3-4 5-2s-1 4-5 2zM5 9l6-8 2 1.500L7 11M9 11c3 1 5-3 3-4s-4 0-5 1" stroke="#ddd"/>')}
    </div>
    <button type="button" class="clock"><span>17:07</span><span>07/02/2026</span></button>
    <button type="button" class="note" aria-label="Notifications">${svg(20, 20, '<path d="M0 1h13v11H6l-3 3v-3H0z" fill="#fff"/><path d="M2 4h9M2 6.500h9M2 9h6" stroke="#1b2c2c"/><circle cx="13" cy="14" r="5.500" fill="#2b3b3c" stroke="#8d9797"/><path d="m12 12.500 1.500-1V17" stroke="#fff" stroke-width="1.200"/>')}</button>
    <div class="show"></div>
  </div>`);

/* ---------- pointer over the Contour button ---------- */

element('mouse-pointer', `
  :host { display: block; position: absolute; left: 462px; top: 67px; pointer-events: none; }
`, svg(11, 15, '<path d="M1 1v11l2.500-2.300L5.500 14l2-1-2-4H9z" fill="#fff" stroke="#777"/>'));
document.body.append(document.createElement('mouse-pointer'));
</script>
</body>
</html>
